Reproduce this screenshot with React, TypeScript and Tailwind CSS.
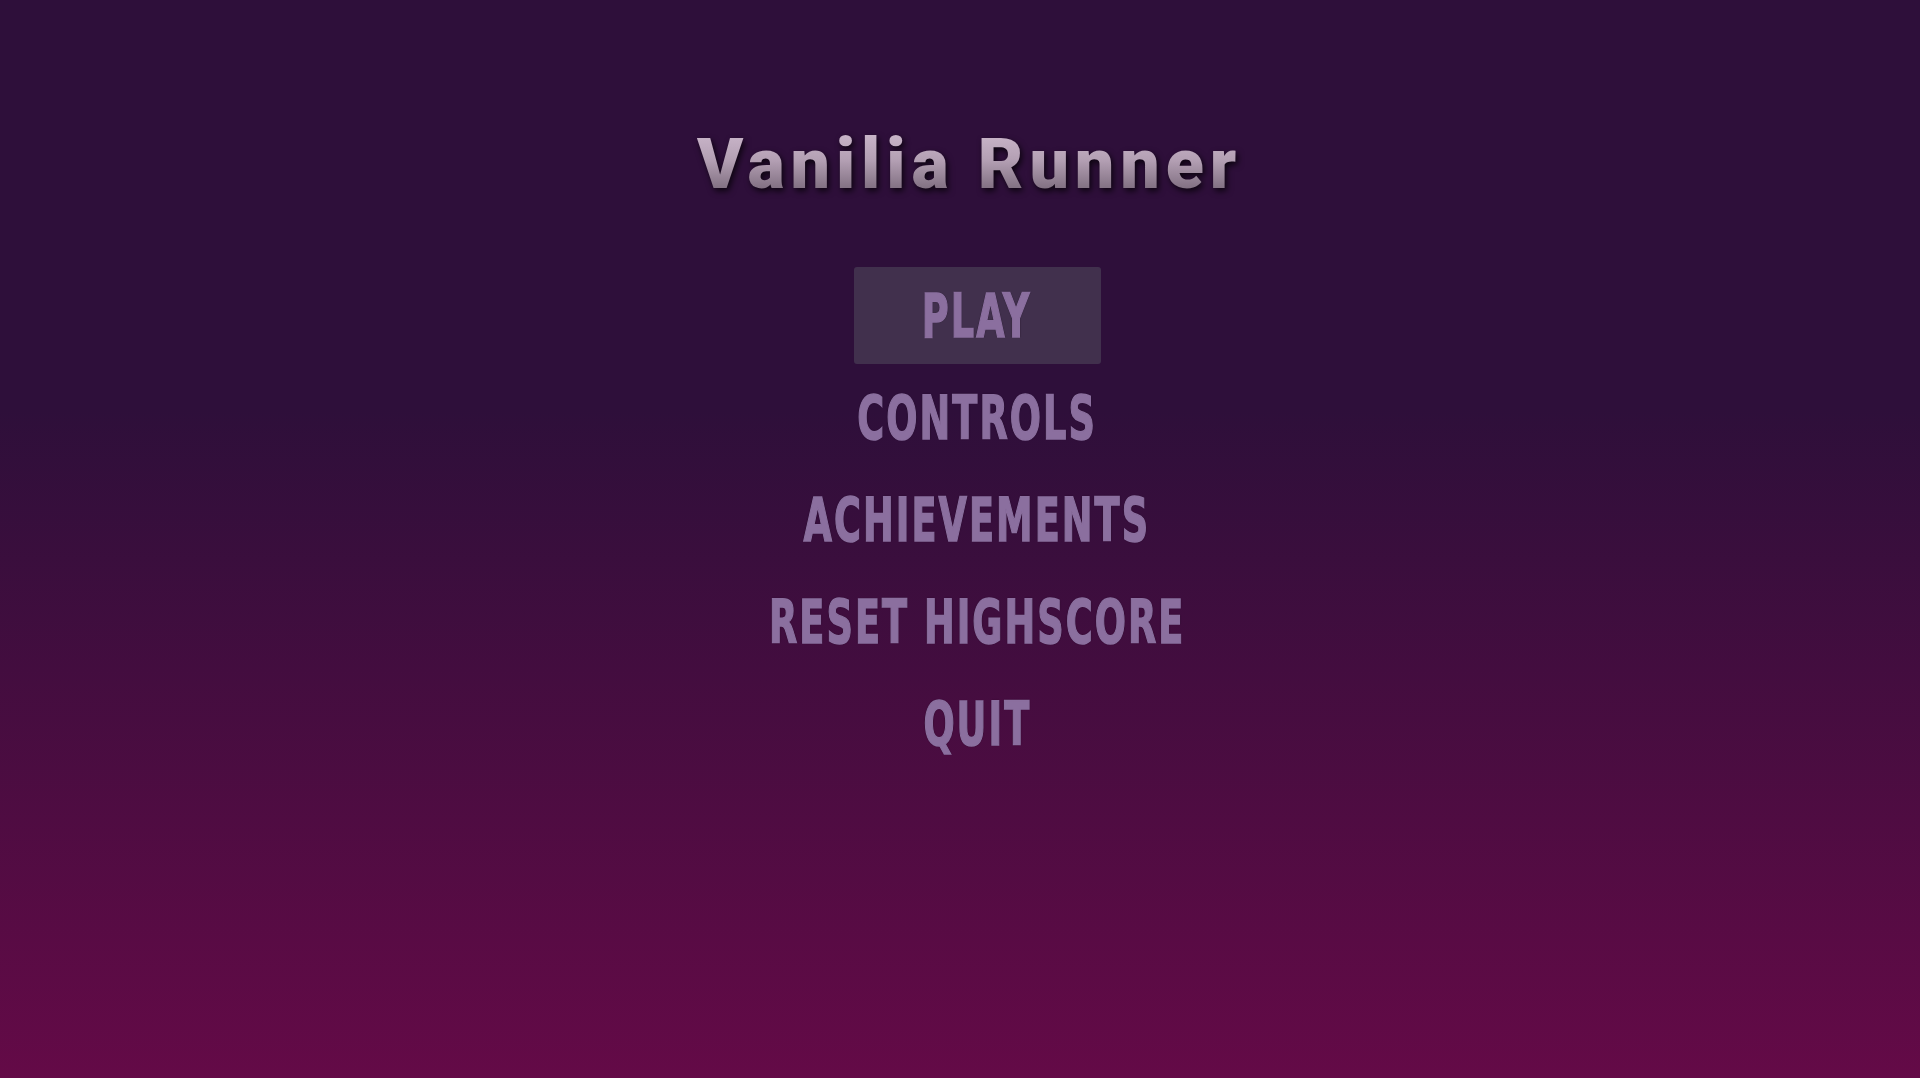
const menuItems = [
    { name: 'PLAY', active: true },
    { name: 'CONTROLS', active: false },
    { name: 'ACHIEVEMENTS', active: false },
    { name: 'RESET HIGHSCORE', active: false },
    { name: 'QUIT', active: false },
];

export default function App() {
    return (
        <div className="w-full h-[1078px] overflow-hidden bg-[linear-gradient(to_bottom,#2e0f3a_0%,#2e0f3a_38%,#640a47_100%)]">
            <div className="flex flex-col items-center pt-[129px]">
                <h1
                    className="ml-[19px] text-[70px] leading-none font-black tracking-[5.9px] font-['Roboto',sans-serif] bg-[linear-gradient(to_bottom,#cdb9cd_0%,#b39fb3_45%,#6f5f70_100%)] bg-clip-text text-transparent [filter:drop-shadow(2px_3px_3px_rgba(0,0,0,0.75))]"
                >
                    Vanilia Runner
                </h1>

                <nav className="ml-[34px] mt-[68px] flex flex-col items-center gap-[5px]">
                    {
                        menuItems.map(({ name, active }) => (
                            <button
                                key={name}
                                className={`h-[97px] flex items-center justify-center rounded-[3px] ${active ? 'w-[247px] bg-[#41304d]' : 'px-4'}`}
                            >
                                <span className="block scale-x-[0.68] text-[60px] leading-none font-bold tracking-[3px] text-[#8b6f9f] font-['DejaVu_Sans_Condensed','DejaVu_Sans',sans-serif] [-webkit-text-stroke:1.5px_#8b6f9f] [text-shadow:0_0_1.5px_#1e1024,0_0_1px_#1e1024,0_0_1px_#1e1024] whitespace-nowrap">
                                    {name}
                                </span>
                            </button>
                        ))
                    }
                </nav>
            </div>
        </div>
    )
}
